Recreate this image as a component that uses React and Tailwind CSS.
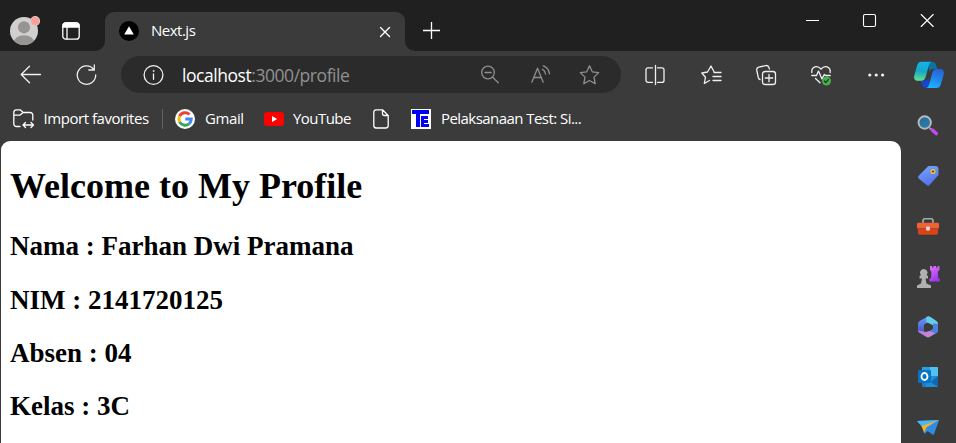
import React from "react";

const line = {
  fill: "none",
  stroke: "currentColor",
  strokeWidth: 1.3,
  strokeLinecap: "round",
  strokeLinejoin: "round",
};

function Icon({ className = "", size = 20, w, h, children, ...rest }) {
  const width = w ?? size;
  const height = h ?? size;
  return (
    <svg
      width={width}
      height={height}
      viewBox={`0 0 ${width} ${height}`}
      className={`block shrink-0 overflow-visible ${className}`}
      {...rest}
    >
      {children}
    </svg>
  );
}

function Avatar() {
  return (
    <Icon size={28} className="ml-2.5 mt-[17px]">
      <defs>
        <clipPath id="avatar">
          <circle cx="14" cy="14" r="14" />
        </clipPath>
      </defs>
      <g clipPath="url(#avatar)">
        <rect width="28" height="28" fill="#d2d0ce" />
        <circle cx="14" cy="10.3" r="6.1" fill="#979593" />
        <ellipse cx="14" cy="25.5" rx="10" ry="7.3" fill="#979593" />
      </g>
      <circle cx="25.2" cy="4" r="4.9" fill="#d9ccca" />
      <circle cx="25.2" cy="4" r="4" fill="#ff9e97" />
    </Icon>
  );
}

function TitleBar() {
  return (
    <header className="flex h-[51px] items-start bg-[#202020] text-white">
      <Avatar />
      <Icon size={18} className="ml-6 mt-[22px]" {...line}>
        <rect x="0.8" y="0.8" width="16.4" height="16.4" rx="3" />
        <path d="M1 4a3 3 0 0 1 3-3h10a3 3 0 0 1 3 3v1H1z" fill="#fff" />
        <path d="M5 5v12" />
      </Icon>
      <div className="relative ml-[25px] mt-3 flex h-[39px] w-[300px] items-center rounded-t-[9px] bg-[#3b3b3b]">
        <Icon size={10} className="absolute -left-2.5 bottom-0">
          <path d="M10 0v10H0A10 10 0 0 0 10 0z" fill="#3b3b3b" />
        </Icon>
        <Icon size={10} className="absolute -right-2.5 bottom-0">
          <path d="M0 0v10h10A10 10 0 0 1 0 0z" fill="#3b3b3b" />
        </Icon>
        <Icon size={20} className="mb-px ml-3.5">
          <circle cx="10" cy="10" r="10" fill="#000" />
          <path d="M10 5.200l4.800 8.400H5.200z" fill="#fff" />
        </Icon>
        <span className="mb-[3px] ml-3 w-[229px] text-[15px] leading-5 tracking-[-0.5px]">Next.js</span>
        <Icon size={10} {...line} strokeWidth={1.4}>
          <path d="M.5.5l9 9M9.500.5l-9 9" />
        </Icon>
      </div>
      <Icon size={17} className="ml-[18px] mt-[22px]" {...line} strokeLinecap="butt">
        <path d="M8.500 0v17M0 8.500h17" />
      </Icon>
      <Icon size={13} className="ml-[366px] mt-3.5" {...line} strokeLinecap="butt" strokeWidth={1}>
        <path d="M0 6.500h13" />
      </Icon>
      <Icon size={13} className="ml-11 mt-3.5" {...line} strokeWidth={1.1}>
        <rect x="0.5" y="0.5" width="12" height="12" rx="1.5" />
      </Icon>
      <Icon size={13} className="ml-11 mt-3.5" {...line} strokeWidth={1.1}>
        <path d="M1.200.5l12 12M13.200.5l-12 12" />
      </Icon>
    </header>
  );
}

function AddressBar() {
  return (
    <div className="ml-6 flex h-[37px] w-[500px] items-center rounded-full bg-[#2b2b2b]">
      <Icon size={20} className="ml-[22px]" {...line}>
        <circle cx="10.5" cy="10" r="9.4" />
        <path d="M10.500 9v5.300" />
        <circle cx="10.5" cy="6" r=".6" fill="currentColor" strokeWidth=".6" />
      </Icon>
      <span className="ml-[19px] w-[299px] whitespace-nowrap text-[17.5px] leading-6 tracking-[-0.45px] text-white">
        localhost<span className="text-[#919191]">:3000/profile</span>
      </span>
      <div className="flex items-center text-[#8f8f8f]">
        <Icon size={19} {...line}>
          <circle cx="7" cy="7.5" r="6.3" />
          <path d="M4 7.500h6.200M11.700 12.300l5.600 5.400" />
        </Icon>
        <Icon size={20} className="ml-[31px]" {...line}>
          <path d="M.8 17.200L6.500 3.200l5.700 14M3 12.500h7.200M11.500 4.300q2.500 1.200 3 4.700M12.300.8q5.500 1.900 6.200 8" />
        </Icon>
        <Icon size={20} className="ml-7" {...line}>
          <path d="M10.500.8l2.800 6 6.400.8-4.700 4.500 1.200 6.600-5.700-3.200-5.700 3.200L6 12.100 1.300 7.600l6.400-.8z" />
        </Icon>
      </div>
    </div>
  );
}

function Copilot() {
  return (
    <Icon w={30} h={28} className="ml-[30px]">
      <defs>
        <linearGradient id="cpA" x1="0.4" y1="0" x2="0.3" y2="1">
          <stop offset="0" stopColor="#12b4e6" />
          <stop offset="0.5" stopColor="#15a8c8" />
          <stop offset="1" stopColor="#63e08c" />
        </linearGradient>
        <linearGradient id="cpB" x1="0.6" y1="0" x2="0.3" y2="1">
          <stop offset="0" stopColor="#2763d8" />
          <stop offset="0.5" stopColor="#2386ee" />
          <stop offset="1" stopColor="#18b8fa" />
        </linearGradient>
      </defs>
      <path d="M14 1h4.500c2 0 3 1 3.500 3l1 4h-4c-2 0-3 1-3.500 3z" fill="#0873a6" />
      <path d="M16 26.700h-4.500c-2 0-3-1-3.500-3l-1-4h4c2 0 3-1 3.500-3z" fill="#1746d4" />
      <path d="M7.500.8H18c-2 .5-2.700 2-3.300 4.200l-3 10.700c-.7 2.700-2 4-4.500 4H4c-3 0-4.600-2-3.700-5.500L3 5C3.900 2 5 .8 7.500.8z" fill="url(#cpA)" />
      <path d="M22.500 27H12c2-.5 2.700-2 3.300-4.200l3-10.700c.7-2.700 2-4 4.500-4H26c3 0 4.600 2 3.700 5.500L27 22.800c-.9 3-2 4.200-4.500 4.200z" fill="url(#cpB)" />
    </Icon>
  );
}

function Toolbar() {
  return (
    <nav className="flex h-[47px] items-center text-[#f0f0f0]">
      <Icon w={21} h={20} className="ml-5" {...line}>
        <path d="M20.500 9.500H1.500M9.500 1.200L1.200 9.500l8.300 8.300" />
      </Icon>
      <Icon size={21} className="ml-[35px]" {...line}>
        <path d="M17.800 5.500A9.200 9.200 0 1 0 19.700 11M18.300 1v5h-5.500" />
      </Icon>
      <AddressBar />
      <Icon size={20} className="ml-6" {...line}>
        <path d="M7.500 2.800H3a2 2 0 0 0-2 2v10.600a2 2 0 0 0 2 2h4.500M12.500 2.800H17a2 2 0 0 1 2 2v10.600a2 2 0 0 1-2 2h-4.500M10.500.5v19" />
      </Icon>
      <Icon size={20} className="ml-9" {...line}>
        <path d="M8.500 15.500l-5.200 3 1.200-6.300L.8 8l5.700-1L10 1l3.200 6M13 7.500h7M12 11.500h8M12 15.500h8" />
      </Icon>
      <Icon size={20} className="ml-[35px]" {...line}>
        <path d="M4 14.500c-1-.2-1.400-.8-1.700-2L.8 5.500C.4 3.700 1 2.700 2.700 2.200l7-1.600c1.800-.4 2.800.2 3.300 2l.4 1.400" />
        <rect x="6.500" y="6.500" width="13" height="13" rx="2.600" />
        <path d="M13 9.300v7.400M9.300 13h7.400" />
      </Icon>
      <Icon size={20} className="ml-[35px]" {...line}>
        <path d="M.8 7.500C.2 1.500 6.500-.3 10 4.200 13.500-.3 19.800 1.500 19.200 7.500M.8 10.500h4.700l2-4.500 3.500 8 2.300-4.500 1.200 1h4.700M4.500 13.500L9 17.800" />
        <circle cx="15.500" cy="16" r="4.500" fill="#4eac50" stroke="none" />
        <path d="M13.400 16l1.400 1.500 2.700-3" stroke="#17431a" strokeWidth="1.200" />
      </Icon>
      <Icon w={16} h={4} className="ml-[37px]" fill="currentColor">
        <circle cx="1.800" cy="2" r="1.600" />
        <circle cx="8.200" cy="2" r="1.600" />
        <circle cx="14.600" cy="2" r="1.600" />
      </Icon>
      <Copilot />
    </nav>
  );
}

function Bookmarks() {
  return (
    <div className="flex h-[43px] items-center whitespace-nowrap pb-px text-[15px] leading-5 text-white [&>span]:mb-[3px]">
      <Icon w={21} h={20} className="ml-[13px]" {...line}>
        <path d="M7 17.500H3.500a2.700 2.700 0 0 1-2.700-2.700V3.500A2.700 2.700 0 0 1 3.500.8h3.700l3 2.700h6.900a2.700 2.700 0 0 1 2.700 2.700V11M.8 6.200h6l3.400-2.700M10 16h10.500M12.500 13.500L10 16l2.500 2.500M18 13.500l2.500 2.500-2.500 2.500" />
      </Icon>
      <span className="ml-[9.6px] w-[118.4px] tracking-[-0.46px]">Import favorites</span>
      <i className="h-5 w-px bg-[#626262]" />
      <Icon size={20} className="ml-3">
        <circle cx="10" cy="10" r="10" fill="#fff" />
        <g fill="none" strokeWidth="3">
          <path d="M14.500 5.500A6.200 6.200 0 0 0 4.600 7.200" stroke="#ea4335" />
          <path d="M4.600 7.200a6.200 6.200 0 0 0 0 5.600" stroke="#fbbc05" />
          <path d="M4.600 12.800a6.200 6.200 0 0 0 9.500 2" stroke="#34a853" />
          <path d="M14.100 14.800A6.200 6.200 0 0 0 16.200 10H10.300" stroke="#4285f4" />
        </g>
      </Icon>
      <span className="ml-2.5 w-[59px] tracking-[-0.4px]">Gmail</span>
      <Icon w={20} h={14}>
        <rect width="20" height="14" rx="3" fill="#f00" />
        <path d="M8 4l5.200 3L8 10z" fill="#fff" />
      </Icon>
      <span className="ml-[9px] w-20 tracking-[-0.55px]">YouTube</span>
      <Icon w={16} h={20} {...line}>
        <path d="M3 .8h6.500l5.700 5.700V16.500a2.500 2.500 0 0 1-2.500 2.500H3A2.400 2.400 0 0 1 .8 16.500V3.200A2.400 2.400 0 0 1 3 .8zM9.500.8v4a1.700 1.700 0 0 0 1.700 1.700h4" />
      </Icon>
      <Icon size={20} className="ml-[22px]">
        <rect width="20" height="20" fill="#fff" />
        <path d="M1 1h17v4H1zM5 5h4v13H5zM10 7h7v3h-4v1h4v3h-4v1h5v3h-8z" fill="#0000f5" />
      </Icon>
      <span className="ml-2.5 tracking-[-0.55px]">Pelaksanaan Test: Si...</span>
    </div>
  );
}

function Sidebar() {
  return (
    <aside className="flex w-[55px] shrink-0 flex-col items-center gap-[30.3px] pr-[2px] pt-[18px]">
      <Icon size={20}>
        <defs>
          <linearGradient id="lens" x2="0.6" y2="1">
            <stop offset="0" stopColor="#286a91" />
            <stop offset="1" stopColor="#287db0" />
          </linearGradient>
          <linearGradient id="violet" x2="0.5" y2="1">
            <stop offset="0" stopColor="#e678fa" />
            <stop offset="1" stopColor="#9d37f0" />
          </linearGradient>
        </defs>
        <path d="M11.500 12l3 2.500" stroke="#999" strokeWidth="2" />
        <circle cx="6.700" cy="6.500" r="6.200" fill="url(#lens)" stroke="#b9b9b9" strokeWidth="1.900" />
        <path d="M14.500 14.200l3.700 3.300" stroke="#c943f7" strokeWidth="3.600" strokeLinecap="round" />
      </Icon>
      <Icon size={20}>
        <defs>
          <linearGradient id="tag" x2="0.4" y2="1">
            <stop offset="0" stopColor="#78a8ff" />
            <stop offset="1" stopColor="#5573e9" />
          </linearGradient>
        </defs>
        <path d="M11.500 0h6c1.800 0 3 1 3 3v6L11.800 18.800c-1 1.200-2 1.200-3.200.2L1 12.700c-1.200-1-1.200-2 0-3.200L9.400 1c.7-.7 1.100-1 2.100-1z" fill="url(#tag)" />
        <circle cx="15" cy="5.500" r="1.800" fill="#36404c" stroke="#f1c21c" strokeWidth="1.500" />
      </Icon>
      <Icon w={22} h={20}>
        <path d="M6 6.500V4c0-1.500.7-2.300 2-2.300h6c1.300 0 2 .8 2 2.300v2.500" fill="none" stroke="#aaa" strokeWidth="1.600" />
        <rect y="5.800" width="22" height="6" rx="1.300" fill="#ef6235" />
        <path d="M1 11.500h20v4.500a1.700 1.700 0 0 1-1.700 1.700H2.700A1.700 1.700 0 0 1 1 16z" fill="#d94417" />
        <path d="M0 11.500h22" stroke="#b63a1c" strokeWidth=".8" />
        <rect x="9" y="9.500" width="4" height="4" rx="1" fill="#d7d7d7" />
      </Icon>
      <Icon w={22} h={20} className="translate-y-px">
        <path d="M0 20v-2.500l4-2 1-5H2.500V8L4 7a3.600 3.600 0 1 1 5.500 0l1.500 1v2.500H8.500l1 5 4.500 2V20z" fill="#b0b0b0" />
        <path d="M13-2h2v1.500h1.500V-2h2.500v1.500h1.500V-2h2v4l-1.700 2 .5 6 1.500 1V13.500H12.500V11l1.500-1 .5-6L13 2z" fill="url(#violet)" />
      </Icon>
      <Icon size={20}>
        <defs>
          <linearGradient id="mA" x2="0" y2="1">
            <stop offset="0" stopColor="#709aff" />
            <stop offset="1" stopColor="#4450bf" />
          </linearGradient>
          <linearGradient id="mB" x2="1" y2=".4">
            <stop offset="0" stopColor="#b77ad8" />
            <stop offset="1" stopColor="#ca86dc" />
          </linearGradient>
        </defs>
        <path d="M10-.5L1.500 4Q0 5 0 6.800V14l6 3V8l5-3V0z" fill="url(#mA)" />
        <path d="M8.500 0q2-1.300 4 0l6 4Q20 5 20 6.800V10l-4.500-1L8 5z" fill="#64cde8" />
        <path d="M20 7v7q0 1.500-1.500 2.300L14 18l-3-4 4-2.500v-5z" fill="#4b82dd" />
        <path d="M0 13.500q0 1.500 1.500 2.300L8.500 20q1.500.9 3 0l6-3.500-7-3-2 1.500z" fill="url(#mB)" />
        <path d="M9.500 5.700L14.500 8v4L10 14.500 6.200 12V7.500z" fill="#3b3b3b" />
      </Icon>
      <Icon size={20}>
        <rect x="4" y="0" width="16" height="20" rx="1" fill="#1979c5" />
        <path d="M4 0h9v10H4z" fill="#2f9de2" />
        <path d="M12 0h7a1 1 0 0 1 1 1v9h-8z" fill="#51bff0" />
        <path d="M10 9h10v11H7z" fill="#208dd2" />
        <path d="M20 9v11l-7-5z" fill="#1266a9" />
        <rect x="0" y="3" width="13" height="13" rx="1.200" fill="#0872c7" />
        <ellipse cx="6.500" cy="9.500" rx="3" ry="3.500" fill="none" stroke="#fff" strokeWidth="1.800" />
      </Icon>
      <Icon w={22} h={20} className="-translate-y-px">
        <path d="M0 4L22 3 16.500 18l-6-4-3 3-2-6.500z" fill="#3094e8" />
        <path d="M0 4l22-1L5.500 10z" fill="#4cb5f7" />
        <path d="M22 3L4.500 9l2.500 6.500 2.500-5z" fill="#f5b41f" />
        <path d="M22 3L9.500 10.500 16.500 18z" fill="#2f8be6" />
      </Icon>
    </aside>
  );
}

function Profile() {
  return (
    <main
      className="ml-px h-[302px] rounded-tl-[9px] rounded-tr-[10px] bg-white pl-[9px] pt-[25px] font-bold text-black"
      style={{ fontFamily: '"Liberation Serif", serif' }}
    >
      <h1 className="mb-[24.4px] text-4xl leading-[41px]">Welcome to My Profile</h1>
      <div className="flex flex-col gap-[22.3px] text-[27px] leading-[31px]">
        <h2>Nama : Farhan Dwi Pramana</h2>
        <h2>NIM : 2141720125</h2>
        <h2>Absen : 04</h2>
        <h2>Kelas : 3C</h2>
      </div>
    </main>
  );
}

export default function App() {
  return (
    <div
      className="h-[443px] w-[956px] overflow-hidden bg-[#3b3b3b]"
      style={{ fontFamily: '"Open Sans", "Noto Sans", sans-serif' }}
    >
      <TitleBar />
      <Toolbar />
      <div className="flex h-[345px]">
        <div className="w-[901px] shrink-0">
          <Bookmarks />
          <Profile />
        </div>
        <Sidebar />
      </div>
    </div>
  );
}
